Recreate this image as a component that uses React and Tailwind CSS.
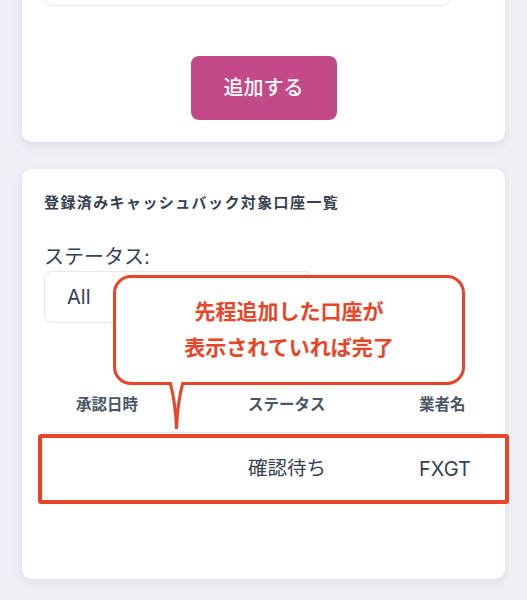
export default function App() {
  const font = { fontFamily: 'Inter, "Noto Sans CJK JP", sans-serif' };
  return (
    <div className="min-h-[600px] w-[527px] overflow-hidden bg-[#edf0f5] px-[22px] pb-[21px]" style={font}>
      {/* Card 1 */}
      <div className="-mt-[68px] rounded-[10px] bg-white px-[22px] pt-[22px] pb-[22px] shadow-[0_4px_10px_rgba(100,116,139,0.12)]">
        <div className="h-[52px] w-[406px] rounded-[8px] border border-[#e3e7ee] bg-white" />
        <div className="mt-[50px] flex justify-center">
          <button className="h-[64px] w-[146px] rounded-[8px] bg-[#c24b87] text-[20px] font-medium text-white">
            追加する
          </button>
        </div>
      </div>

      {/* Card 2 */}
      <div className="relative mt-[27px] h-[410px] rounded-[10px] bg-white px-[22px] pt-[22px] shadow-[0_4px_10px_rgba(100,116,139,0.12)]">
        <div className="text-[15px] leading-[24px] font-bold tracking-[1.4px] text-[#374151]">
          登録済みキャッシュバック対象口座一覧
        </div>
        <div className="mt-[28px] text-[20px] leading-[28px] text-[#374151]">ステータス:</div>
        <div className="flex h-[52px] w-[269px] items-center rounded-[8px] border border-[#e3e7ee] pl-[22px] text-[20px] text-[#374151]">
          All
        </div>

        {/* Table */}
        <div className="mt-[54px]">
          <div className="grid h-[56px] grid-cols-[204px_171px_1fr] items-center border-b border-[#e5e7eb] text-[15.5px] font-semibold text-[#4b5563]">
            <div className="pl-[32px]">承認日時</div>
            <div>ステータス</div>
            <div>業者名</div>
          </div>
          <div className="grid h-[72px] grid-cols-[204px_171px_1fr] items-center text-[19.5px] text-[#374151]">
            <div className="pl-[32px]"></div>
            <div>確認待ち</div>
            <div className="text-[20px]">FXGT</div>
          </div>
        </div>

        {/* Annotation: red highlight rectangle */}
        <div className="absolute left-[16px] top-[265px] h-[70px] w-[471px] rounded-[3px] border-[4px] border-[#e94428]" />

        {/* Annotation: callout bubble */}
        <div className="absolute left-[91px] top-[106px] flex h-[110px] w-[352px] flex-col items-center justify-center rounded-[18px] border-[3px] border-[#e94428] bg-white text-[21px] leading-[36px] font-bold text-[#e94428]">
          <div>先程追加した口座が</div>
          <div>表示されていれば完了</div>
        </div>
        <svg
          className="absolute left-[146px] top-[213px]"
          width="18"
          height="50"
          viewBox="0 0 18 50"
        >
          <path d="M2 0 Q7.5 20 8.5 47 Q9.5 20 15 0 Z" fill="#ffffff" />
          <path d="M2 0 Q7.5 20 8.5 47 Q9.5 20 15 0" fill="none" stroke="#e94428" strokeWidth="3" strokeLinejoin="miter" />
        </svg>
      </div>
    </div>
  );
}
